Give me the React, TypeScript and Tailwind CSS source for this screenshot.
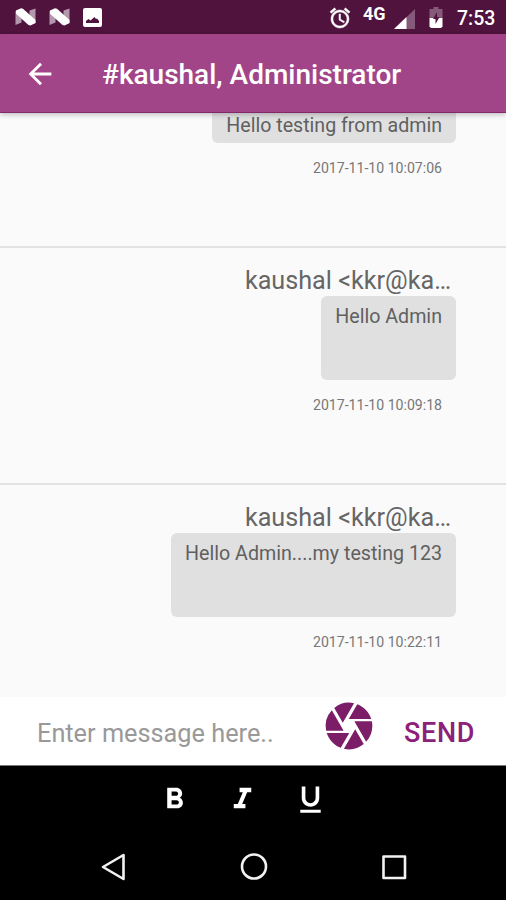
import React from "react";
import { MdAlarm, MdArrowBack, MdCamera, MdFormatBold, MdFormatItalic, MdFormatUnderlined } from "react-icons/md";

const messages = [
  { id: 2, sender: "kaushal <kkr@ka…", text: "Hello Admin", time: "2017-11-10 10:09:18" },
  { id: 3, sender: "kaushal <kkr@ka…", text: "Hello Admin....my testing 123", time: "2017-11-10 10:22:11" },
];

function NougatIcon() {
  return (
    <svg className="h-[18px] w-[21px]" viewBox="0 0 21 18">
      <path d="M.5 3 6.5 1v13.5L.5 17zM14.5 2.5l6-2V15l-6 2z" fill="#b397ac" />
      <path d="M1 2.5 6 .3 8 .8 20.5 12v3L15.5 17.5l-2-.5L1 5.8z" fill="#fff" />
    </svg>
  );
}

function StatusBar() {
  return (
    <header className="flex h-[34px] shrink-0 items-center bg-[#50133d] text-white">
      <div className="ml-[15px] flex items-center gap-[13px]">
        <NougatIcon />
        <NougatIcon />
        <svg className="h-[19px] w-[19px]" viewBox="0 0 19 19">
          <rect width="19" height="19" rx="2" fill="#fff" />
          <path d="M3 15v-2l2.5-2 2 1.5L11.5 9l1.5 2 1-.5 2 2.5v2z" fill="#50133d" />
        </svg>
      </div>
      <div className="ml-auto flex items-center pr-[8px]">
        <MdAlarm className="mt-px h-6 w-6 [&_path:last-child]:stroke-white [&_path:last-child]:[stroke-width:0.5]" />
        <span className="mb-[7px] ml-[11px] w-[24px] text-[18px] leading-5 font-bold">4G</span>
        <svg className="mt-[3px] ml-[7px] h-[20px] w-[21px]" viewBox="0 0 21 20">
          <path d="M0 20 21 0v20z" fill="#85597a" />
          <path d="M0 20 12.5 8v12z" fill="#fff" />
        </svg>
        <svg className="mt-px ml-[14px] h-[21px] w-[14px]" viewBox="0 0 14 21">
          <path d="M4.5 0h5v2h4v9H.5V2h4z" fill="#85597a" />
          <path d="M.5 11h13v8.5L12 21H2L.5 19.5z" fill="#fff" />
          <path d="M8 5 4 12h2.5v5L10.5 10H8z" fill="#50133d" />
        </svg>
        <span className="mt-[3px] ml-[14px] w-[41px] text-[19.5px] leading-6 font-medium whitespace-nowrap">7:53</span>
      </div>
    </header>
  );
}

function Timestamp({ time }: { time: string }) {
  return (
    <time className="mt-[15px] mr-[14px] text-[14.1px] leading-5 whitespace-nowrap text-[#777]">{time}</time>
  );
}

function Message({ sender, text, time }: { sender: string; text: string; time: string }) {
  return (
    <li className="flex h-[237px] shrink-0 flex-col items-end border-b-2 border-[#e2e2e2] pt-[17px] pr-[50px] last:h-[212px] last:border-0">
      <p className="pr-[5px] text-[25.2px] leading-[31px] whitespace-nowrap text-[#666]">{sender}</p>
      <div className="h-[84px] rounded-[6px] bg-[#e0e0e0] px-[14px] pt-[9px] text-[19.65px] leading-6 whitespace-nowrap text-[#606060]">
        {text}
      </div>
      <Timestamp time={time} />
    </li>
  );
}

export default function App() {
  return (
    <div className="flex h-[900px] w-[506px] flex-col overflow-hidden bg-[#fafafa] font-[Roboto,sans-serif]">
      <StatusBar />
      <nav className="z-10 flex h-[79px] shrink-0 items-center border-b border-[#86276b] bg-[#a24588] text-white shadow-[0_2px_5px_rgba(0,0,0,0.22)]">
        <MdArrowBack className="mt-px ml-[23px] h-[34px] w-[34px]" />
        <h1 className="mt-[4px] ml-[45px] text-[28px] leading-9 font-medium whitespace-nowrap">#kaushal, Administrator</h1>
      </nav>
      <ul className="flex min-h-0 flex-1 flex-col">
        <li className="flex flex-1 flex-col items-end border-b-2 border-[#e2e2e2] pr-[50px]">
          <div className="h-[30px] rounded-b-[6px] bg-[#e0e0e0] px-[14px] pt-px text-[19.6px] leading-6 whitespace-nowrap text-[#606060]">
            Hello testing from admin
          </div>
          <Timestamp time="2017-11-10 10:07:06" />
        </li>
        {messages.map((m) => (
          <Message key={m.id} sender={m.sender} text={m.text} time={m.time} />
        ))}
      </ul>
      <form className="flex h-[69px] shrink-0 items-center border-b border-[#777] bg-white">
        <span className="mt-[5px] ml-[37px] w-[284px] text-[25.3px] leading-8 whitespace-nowrap text-[#999]">Enter message here..</span>
        <MdCamera className="mb-[10px] h-[56px] w-[56px] text-[#7c1d68]" />
        <button type="button" className="mt-[4px] ml-[27px] text-[27px] leading-8 font-medium tracking-[0.7px] text-[#8b2179]">SEND</button>
      </form>
      <div className="flex h-[67px] shrink-0 items-center justify-center gap-[33px] bg-black pr-[21px] text-white">
        <MdFormatBold className="h-[35px] w-[35px]" />
        <MdFormatItalic className="h-[35px] w-[35px]" />
        <MdFormatUnderlined className="h-[35px] w-[35px]" />
      </div>
      <footer className="flex h-[67px] shrink-0 items-center justify-between bg-black pr-[97px] pl-[98px]">
        <svg className="h-[30px] w-[30px]" viewBox="0 0 30 30" fill="none" stroke="#f2f2f2" strokeWidth="2.6" strokeLinejoin="round">
          <path d="M5 15 25.5 3v24z" />
        </svg>
        <svg className="h-[30px] w-[30px]" viewBox="0 0 30 30" fill="none" stroke="#f2f2f2" strokeWidth="2.6">
          <circle cx="15" cy="14.5" r="12" />
        </svg>
        <svg className="h-[30px] w-[30px]" viewBox="0 0 30 30" fill="none" stroke="#f2f2f2" strokeWidth="2.6" strokeLinejoin="round">
          <rect x="4.5" y="4.5" width="21.5" height="21.5" />
        </svg>
      </footer>
    </div>
  );
}
